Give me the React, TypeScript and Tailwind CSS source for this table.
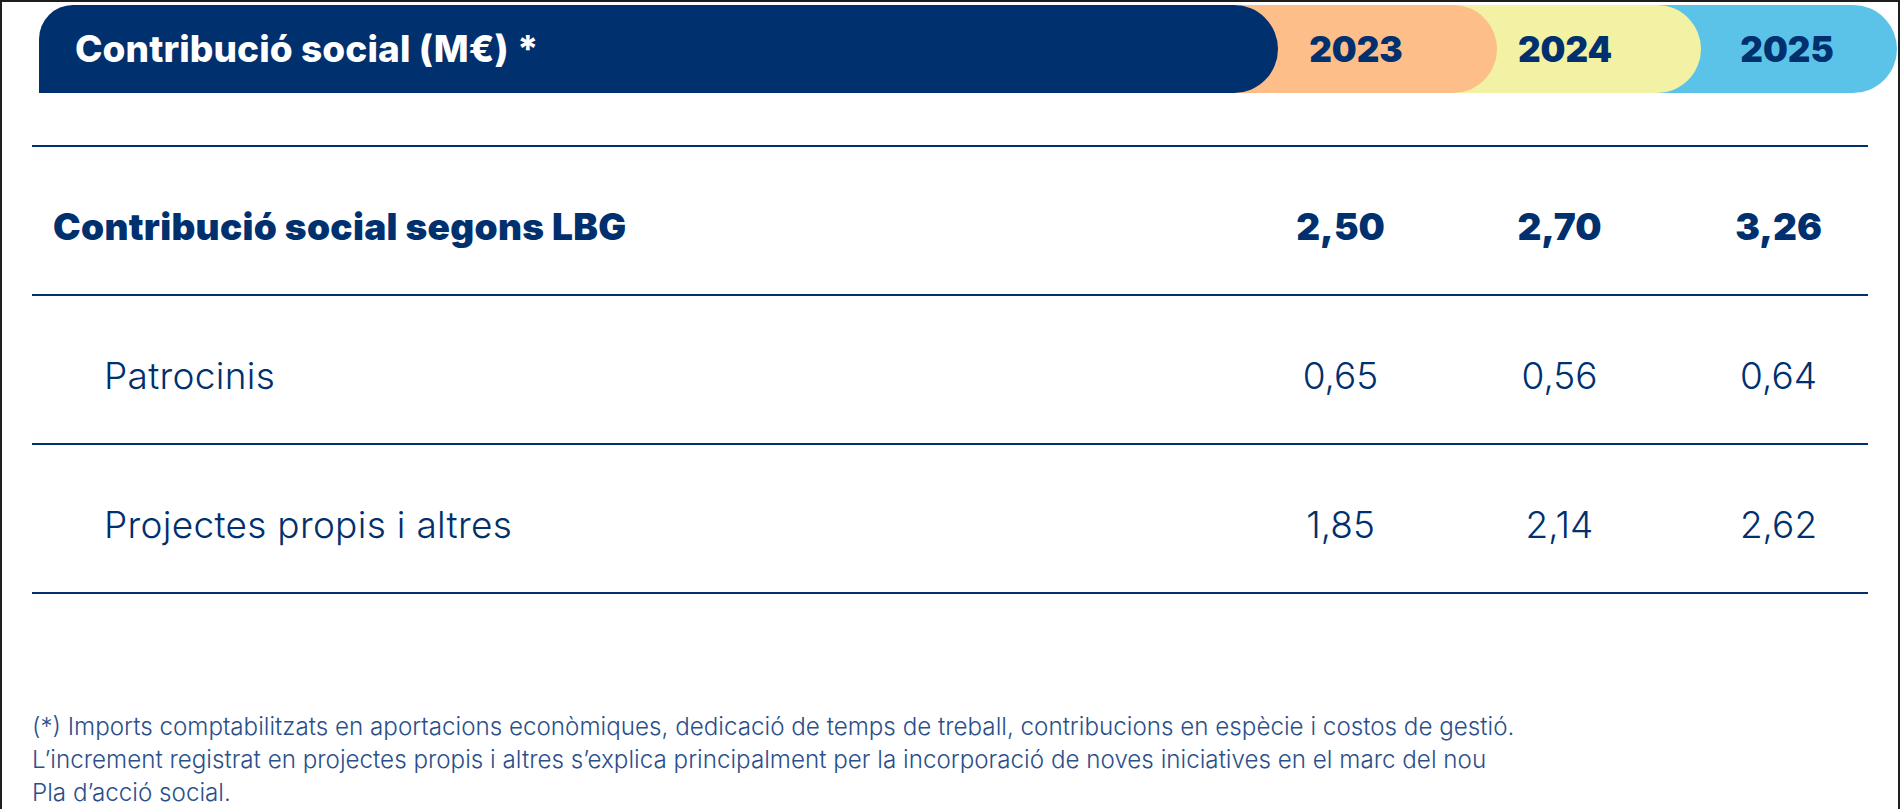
const rows = [
  { label: "Contribució social segons LBG", values: ["2,50", "2,70", "3,26"], strong: true },
  { label: "Patrocinis", values: ["0,65", "0,56", "0,64"], strong: false },
  { label: "Projectes propis i altres", values: ["1,85", "2,14", "2,62"], strong: false },
];

function HeaderBar() {
  return (
    <div className="ml-[37px] mt-[3px] flex h-[88px]">
      <div className="relative z-40 flex w-[1239px] items-center rounded-tl-[34px] rounded-r-[44px] bg-[#00306e] pl-[36px]">
        <span className="text-[37px] font-extrabold tracking-[0.1px] text-white">Contribució social (M€) *</span>
      </div>
      <div className="relative z-30 -ml-[44px] flex w-[263px] items-center justify-center rounded-r-[44px] bg-[#fdbe89] pr-[19px]">
        <span className="text-[35px] font-black text-[#00306e]">2023</span>
      </div>
      <div className="relative z-20 -ml-[42px] flex w-[246px] items-center justify-center rounded-r-[44px] bg-[#f3f1a3] pr-[26px]">
        <span className="text-[35px] font-black text-[#00306e]">2024</span>
      </div>
      <div className="relative z-10 -ml-[44px] flex w-[240px] items-center justify-center rounded-r-[44px] bg-[#5cc3e8] pl-[20px]">
        <span className="text-[35px] font-black text-[#00306e]">2025</span>
      </div>
    </div>
  );
}

export default function App() {
  return (
    <div className="box-border h-[809px] w-[1900px] overflow-hidden border-x-2 border-t-2 border-[#1e1e1e] bg-white font-['Inter',sans-serif] text-[#00306e]">
      <HeaderBar />

      <div className="mx-[30px] mt-[52px] border-b-2 border-[#00306e]">
        {rows.map((row) => (
          <div
            key={row.label}
            className="box-border grid h-[149px] grid-cols-[1199px_219px_219px_219px] items-center border-t-2 border-[#00306e] pt-[12px]"
          >
            <div
              className={
                row.strong
                  ? "pl-[21px] text-[37px] font-black tracking-[0.3px]"
                  : "pl-[72px] text-[37px] font-light tracking-[0.3px]"
              }
            >
              {row.label}
            </div>
            {row.values.map((v, i) => (
              <div
                key={i}
                className={
                  row.strong
                    ? "text-center text-[37px] font-black"
                    : "text-center text-[37px] font-light"
                }
              >
                {v}
              </div>
            ))}
          </div>
        ))}
      </div>

      <p className="ml-[30px] mt-[116px] text-[24.2px] font-light leading-[33px] text-[#2b4f8a]">
        (*) Imports comptabilitzats en aportacions econòmiques, dedicació de temps de treball, contribucions en espècie i costos de gestió.
        <br />
        L’increment registrat en projectes propis i altres s’explica principalment per la incorporació de noves iniciatives en el marc del nou
        <br />
        Pla d’acció social.
      </p>
    </div>
  );
}
